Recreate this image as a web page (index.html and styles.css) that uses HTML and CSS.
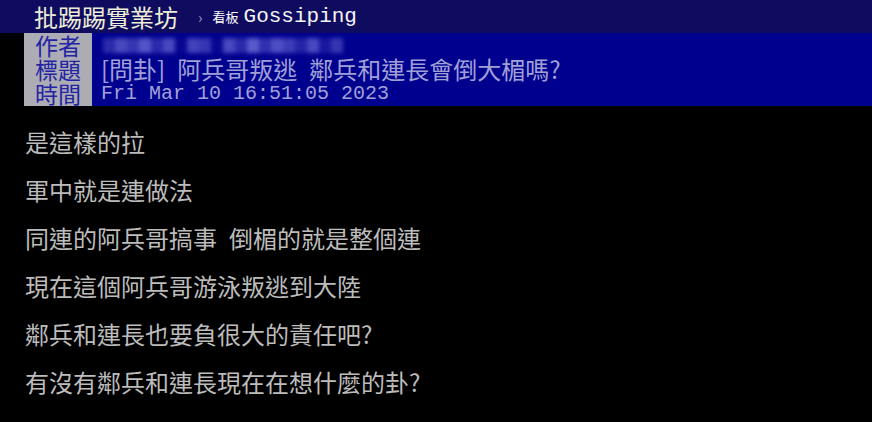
FILE: index.html
```html
<!DOCTYPE html>
<html lang="zh-TW">
<head>
  <meta charset="UTF-8" />
  <meta name="viewport" content="width=device-width, initial-scale=1.0" />
  <title>[問卦] 阿兵哥叛逃 鄰兵和連長會倒大楣嗎? - 看板 Gossiping</title>
  <link rel="stylesheet" href="styles.css">
</head>
<body>
  <!-- 頂部導覽列 -->
  <div class="topbar">
    <span class="site">批踢踢實業坊</span>
    <span class="sep">›</span>
    <span class="board-label">看板</span>
    <span class="board">Gossiping</span>
  </div>

  <!-- 文章標頭 -->
  <div class="meta">
    <div class="tags">作者<br>標題<br>時間</div>
    <div class="values">
      <div class="mosaic">
        <i style="opacity:.35"></i><i style="opacity:.6"></i><i style="opacity:.45"></i>
        <i style="opacity:.7"></i><i style="opacity:.35"></i><i style="opacity:.6"></i>
        <i style="opacity:.05"></i><i style="opacity:.55"></i><i style="opacity:.45"></i>
        <i style="opacity:.05"></i><i style="opacity:.6"></i><i style="opacity:.35"></i>
        <i style="opacity:.75"></i><i style="opacity:.4"></i><i style="opacity:.65"></i>
        <i style="opacity:.5"></i><i style="opacity:.3"></i><i style="opacity:.6"></i>
        <i style="opacity:.2"></i><i style="opacity:.45"></i>
      </div>
      <div class="title">[問卦]&ensp;阿兵哥叛逃&ensp;鄰兵和連長會倒大楣嗎?</div>
      <div class="date">Fri Mar 10 16:51:05 2023</div>
    </div>
  </div>

  <!-- 內文 -->
  <div class="content">
    <p>是這樣的拉</p>
    <p>軍中就是連做法</p>
    <p>同連的阿兵哥搞事&ensp;倒楣的就是整個連</p>
    <p>現在這個阿兵哥游泳叛逃到大陸</p>
    <p>鄰兵和連長也要負很大的責任吧?</p>
    <p>有沒有鄰兵和連長現在在想什麼的卦?</p>
  </div>
</body>
</html>
```

FILE: styles.css
```css
/* ===== 色彩 ===== */
:root {
  --bar:     #0f0b5e;   /* 導覽列底色 */
  --meta:    #00008f;   /* 標頭底色   */
  --tag-bg:  #acacb4;   /* 欄位名底色 */
  --tag-fg:  #2323a4;
  --meta-fg: #a0a0d6;
  --text:    #bcbcbc;
}

* { box-sizing: border-box; margin: 0; padding: 0; }
body {
  background: #000;
  color: var(--text);
  font-family: "Noto Sans CJK TC", "Noto Sans CJK SC", sans-serif;
  overflow: hidden;
}

/* ===== 導覽列 ===== */
.topbar {
  height: 33px;
  background: var(--bar);
  display: flex;
  align-items: center;
  padding-left: 34px;
  color: #eeeed8;
  white-space: nowrap;
}
.site { font-size: 24px; line-height: 33px; }
.sep {
  margin: 0 10px 0 20px;
  font-size: 15px;
  color: #9a9ad0;
}
.board-label { font-size: 13px; color: #fff; margin-right: 5px; }
.board {
  font-family: "Liberation Mono", monospace;
  font-size: 21px;
  color: #f4f4f4;
}

/* ===== 文章標頭 ===== */
.meta {
  margin-left: 24px;
  height: 73px;
  display: grid;
  grid-template-columns: 68px 1fr;
}
.tags {
  background: var(--tag-bg);
  color: var(--tag-fg);
  font-size: 23px;
  line-height: 24px;
  text-align: center;
}
.values {
  background: var(--meta);
  color: var(--meta-fg);
  padding-left: 9px;
  white-space: nowrap;
  display: grid;
  grid-template-rows: 24px 24px 25px;
}
.title {
  font-size: 24px;
  line-height: 24px;
}
.date {
  font-family: "Liberation Mono", monospace;
  font-size: 20px;
  line-height: 25px;
}

/* 作者欄位的馬賽克 */
.mosaic {
  display: flex;
  align-items: center;
  padding-left: 2px;
  filter: blur(2px);
}
.mosaic i {
  display: block;
  width: 12px;
  height: 15px;
  background: #7878e0;
}

/* ===== 內文 ===== */
.content {
  padding: 12px 0 0 25px;
}
.content p {
  font-size: 24px;
  line-height: 48px;
  white-space: nowrap;
}
```
